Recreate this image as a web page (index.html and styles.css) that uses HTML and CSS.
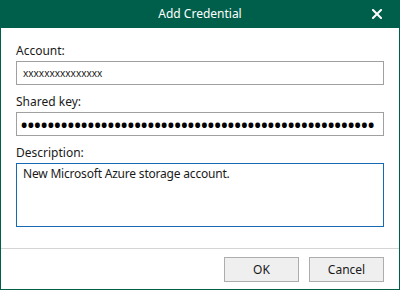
FILE: index.html
```html
<!DOCTYPE html>
<html lang="en">

<head>
    <meta charset="UTF-8">
    <meta name="viewport" content="width=device-width, initial-scale=1.0">
    <title>Add Credential</title>
    <link rel="stylesheet" href="styles.css">
</head>

<body>
    <div class="dialog">
        <div class="title-bar">
            <span class="title">Add Credential</span>
            <button class="close-btn" aria-label="Close">
                <svg width="10" height="10" viewBox="0 0 10 10">
                    <path d="M1 1 L9 9 M9 1 L1 9" stroke="#fff" stroke-width="2" fill="none" stroke-linecap="square" />
                </svg>
            </button>
        </div>

        <div class="content">
            <div class="field first">
                <label for="account">Account:</label>
                <input type="text" id="account" class="text-input" value="xxxxxxxxxxxxxxx">
            </div>

            <div class="field">
                <label for="sharedKey">Shared key:</label>
                <input type="password" id="sharedKey" class="text-input password" value="xxxxxxxxxxxxxxxxxxxxxxxxxxxxxxxxxxxxxxxxxxxxxxxxxxxxx">
            </div>

            <div class="field">
                <label for="description">Description:</label>
                <textarea id="description" class="text-area">New Microsoft Azure storage account.</textarea>
            </div>
        </div>

        <div class="footer">
            <button class="dlg-btn">OK</button>
            <button class="dlg-btn">Cancel</button>
        </div>
    </div>
</body>

</html>
```

FILE: styles.css
```css
body {
    margin: 0;
    padding: 0;
    background: #ffffff;
    font-family: "Noto Sans", "Open Sans", sans-serif;
    font-size: 12px;
    color: #1a1a1a;
}

.dialog {
    width: 400px;
    height: 290px;
    box-sizing: border-box;
    border: 1px solid #005f4b;
    border-top: none;
    display: flex;
    flex-direction: column;
    background: #ffffff;
}

.title-bar {
    height: 28px;
    margin: 0 -1px;
    background-color: #005f4b;
    color: #ffffff;
    display: flex;
    align-items: center;
    justify-content: center;
    position: relative;
}

.title {
    line-height: 28px;
    font-size: 12px;
}

.close-btn {
    position: absolute;
    right: 18px;
    top: 9px;
    width: 10px;
    height: 10px;
    padding: 0;
    border: none;
    background: none;
    display: flex;
    cursor: pointer;
}

.content {
    flex: 1;
    padding: 0 15px;
}

.field {
    display: flex;
    flex-direction: column;
    margin-top: 9px;
}

.field.first {
    margin-top: 15px;
}

label {
    line-height: 16px;
    margin-bottom: 2px;
}

.text-input {
    height: 24px;
    box-sizing: border-box;
    border: 1px solid #a0a0a0;
    padding: 0 6px;
    font-family: "Noto Sans", "Open Sans", sans-serif;
    font-size: 10px;
    color: #1a1a1a;
    outline: none;
}

.password {
    font-size: 22px;
    letter-spacing: -1.6px;
    padding: 0 3px;
    color: #000;
}

.text-area {
    height: 64px;
    box-sizing: border-box;
    border: 1px solid #1769b3;
    padding: 2px 6px;
    font-family: "Noto Sans", "Open Sans", sans-serif;
    font-size: 12px;
    letter-spacing: -0.2px;
    line-height: 16px;
    color: #1a1a1a;
    resize: none;
    outline: none;
}

.footer {
    height: 41px;
    box-sizing: border-box;
    border-top: 1px solid #d4d4d4;
    padding: 8px 15px 0 0;
    display: flex;
    justify-content: flex-end;
    align-items: flex-start;
    gap: 10px;
}

.dlg-btn {
    width: 75px;
    height: 25px;
    border: 1px solid #adadad;
    background-color: #efefef;
    font-family: "Noto Sans", "Open Sans", sans-serif;
    font-size: 12px;
    color: #1a1a1a;
    padding: 0;
    cursor: pointer;
}
```
